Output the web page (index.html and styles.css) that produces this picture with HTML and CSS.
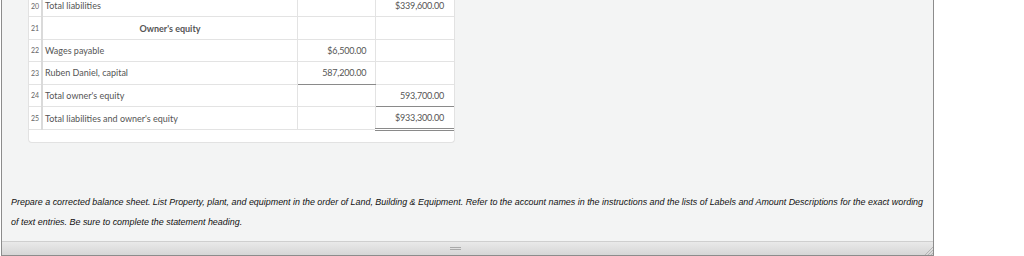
FILE: index.html
```html
<!DOCTYPE html>
<html>
<head>
  <meta charset="UTF-8">
  <title>Balance sheet</title>
  <link rel="stylesheet" href="styles.css">
</head>
<body>
  <div class="panel">
    <div class="sheet">
      <table class="grid">
        <tr>
          <td class="num">20</td>
          <td class="label">Total liabilities</td>
          <td class="amt"></td>
          <td class="amt">$339,600.00</td>
        </tr>
        <tr>
          <td class="num">21</td>
          <td class="label heading">Owner's equity</td>
          <td class="amt"></td>
          <td class="amt"></td>
        </tr>
        <tr>
          <td class="num">22</td>
          <td class="label">Wages payable</td>
          <td class="amt">$6,500.00</td>
          <td class="amt"></td>
        </tr>
        <tr>
          <td class="num">23</td>
          <td class="label">Ruben Daniel, capital</td>
          <td class="amt underline">587,200.00</td>
          <td class="amt"></td>
        </tr>
        <tr>
          <td class="num">24</td>
          <td class="label">Total owner's equity</td>
          <td class="amt"></td>
          <td class="amt underline">593,700.00</td>
        </tr>
        <tr>
          <td class="num">25</td>
          <td class="label">Total liabilities and owner's equity</td>
          <td class="amt"></td>
          <td class="amt double">$933,300.00</td>
        </tr>
      </table>
    </div>

    <div class="instructions">
      <p>Prepare a corrected balance sheet. List Property, plant, and equipment in the order of Land, Building &amp; Equipment. Refer to the account names in the instructions and the lists of Labels and Amount Descriptions for the exact wording of text entries. Be sure to complete the statement heading.</p>
    </div>

    <div class="statusbar">
      <span class="grip"></span>
      <svg class="resize" width="9" height="9" viewBox="0 0 9 9">
        <path d="M1 9 L9 1 M4 9 L9 4 M7 9 L9 7" stroke="#b5b5b5" stroke-width="1" fill="none"/>
      </svg>
    </div>
  </div>
</body>
</html>
```

FILE: styles.css
```css
body {
  margin: 0;
  background: #fff;
  font-family: Lato, "Open Sans", sans-serif;
  overflow: hidden;
}

.panel {
  margin-left: 1px;
  width: 931px;
  height: 255px;
  background: #f3f4f4;
  border: 1px solid #8c8c8c;
  border-top: none;
  display: flex;
  flex-direction: column;
}

/* the spreadsheet card, scrolled so row 20 is partly hidden */
.sheet {
  margin: -5px 0 0 26px;
  width: 425px;
  padding-bottom: 11px;
  background: #fff;
  border: 1px solid #e2e2e2;
  border-top: none;
  border-radius: 0 0 4px 4px;
}

.grid {
  border-collapse: collapse;
  width: 100%;
  table-layout: fixed;
  color: #555;
  font-size: 9px;
}

.grid td {
  height: 21.4px;
  padding: 0;
  border-bottom: 1px solid #e3e3e3;
  white-space: nowrap;
}

.grid .num {
  width: 12px;
  font-size: 7px;
  color: #666;
  text-align: center;
  border-right: 2px solid #dadada;
}

.grid .label {
  width: 252px;
  padding-left: 2px;
  border-right: 1px solid #e3e3e3;
}

.grid .heading {
  text-align: center;
  font-weight: bold;
  padding-left: 0;
}

.grid .amt {
  text-align: right;
  padding-right: 9px;
  letter-spacing: -0.2px;
  border-right: 1px solid #e3e3e3;
}

.grid .amt:last-child {
  border-right: none;
  padding-right: 10px;
}

.grid .underline {
  border-bottom: 1px solid #8a8a8a;
}

.grid .double {
  border-bottom: 3px double #8a8a8a;
}

.instructions {
  flex: 1;
  display: flex;
  align-items: flex-end;
  padding: 0 8px 9px 9px;
}

.instructions p {
  margin: 0;
  font-family: "Liberation Sans", Arial, sans-serif;
  font-style: italic;
  font-size: 8.93px;
  line-height: 20px;
  color: #111;
}

.statusbar {
  height: 13px;
  border-top: 1px solid #cfcfcf;
  background: linear-gradient(#e9e9e9, #d6d6d6);
  display: flex;
  align-items: center;
  justify-content: center;
  position: relative;
}

.grip {
  width: 11px;
  height: 1px;
  margin-right: 24px;
  border-top: 1px solid #a9a9a9;
  border-bottom: 1px solid #a9a9a9;
}

.resize {
  position: absolute;
  right: 0;
  bottom: 0;
}
```
